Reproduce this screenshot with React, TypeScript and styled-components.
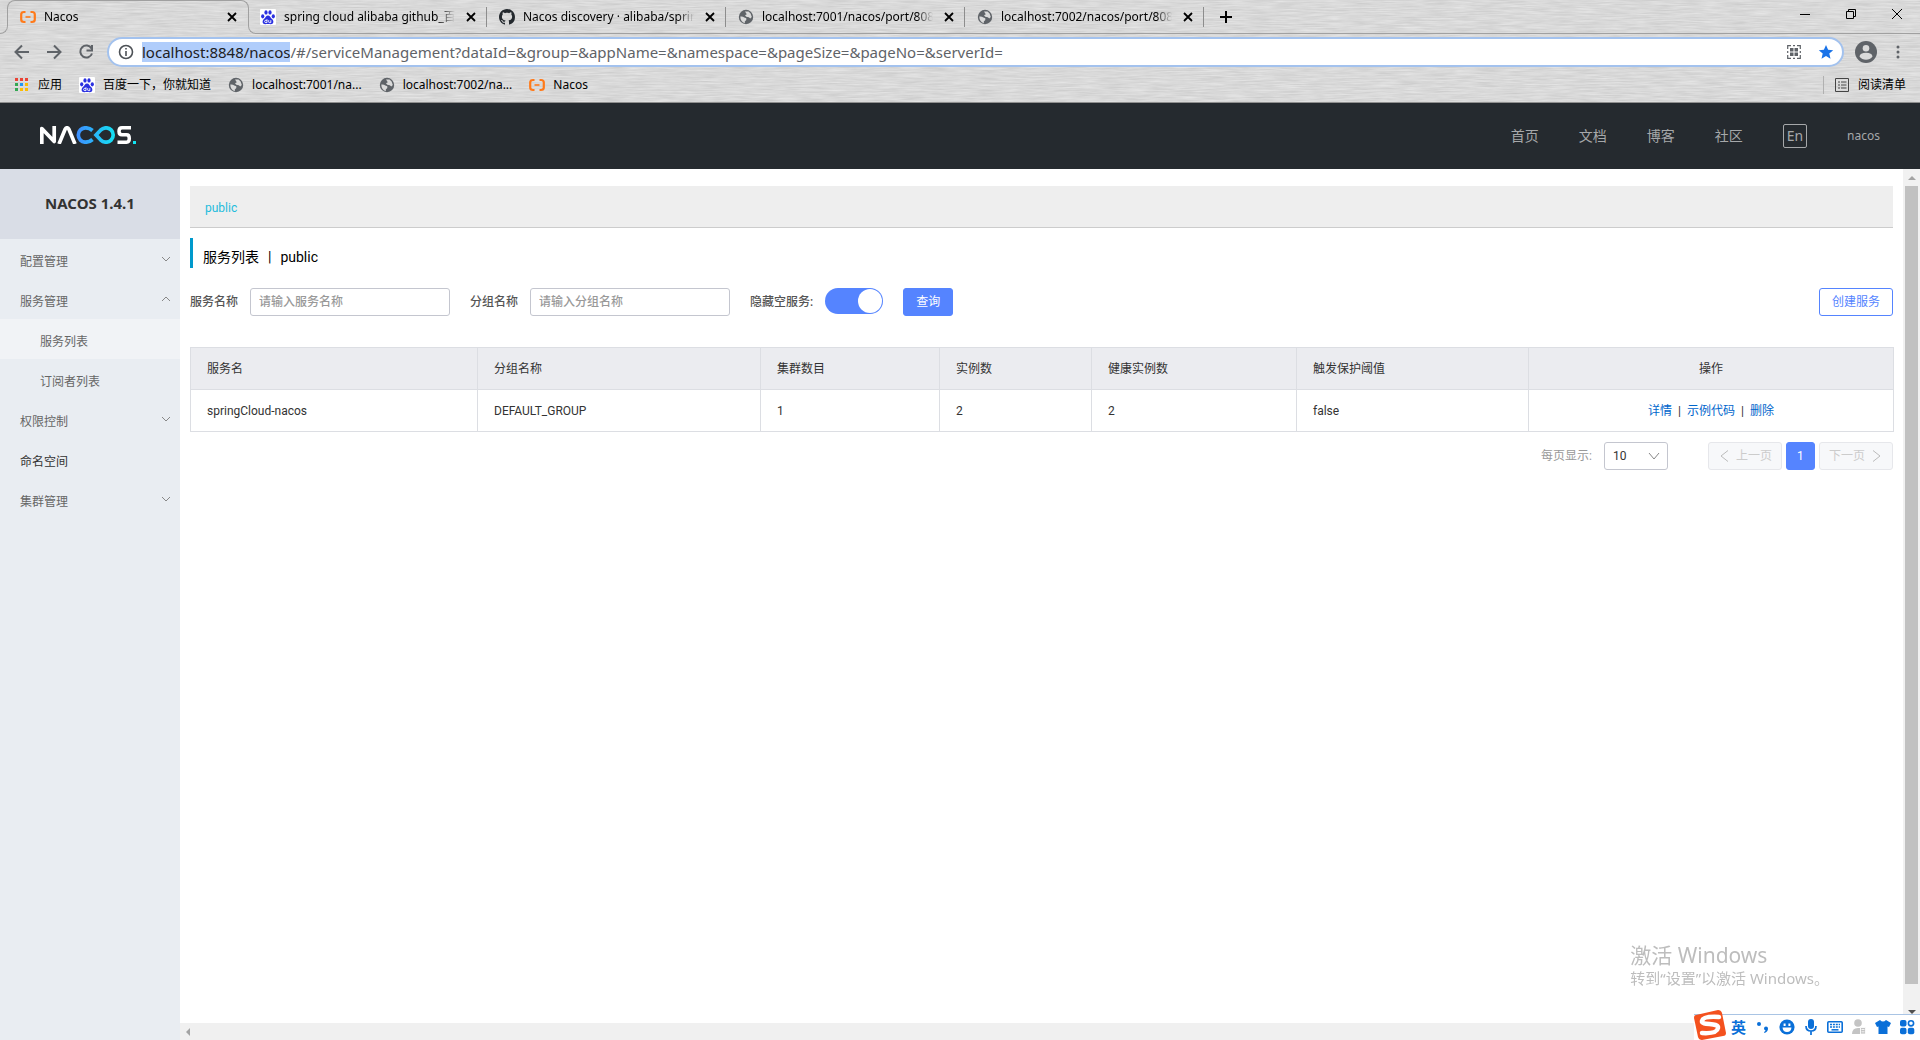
import React from "react";
import styled, { createGlobalStyle } from "styled-components";

const chromeFont = `"Noto Sans", "Noto Sans CJK SC", sans-serif`;
const pageFont = `Roboto, "Noto Sans CJK SC", sans-serif`;

const GlobalStyle = createGlobalStyle`
  * { box-sizing: border-box; }
  html, body { margin: 0; padding: 0; }
  body { font-family: ${chromeFont}; font-size: 12px; line-height: 18px; color: #333; background: #fff; }
  button, input, select { font: inherit; margin: 0; }
  button { cursor: pointer; padding: 0; border: 0; background: none; color: inherit; }
  a { color: inherit; text-decoration: none; }
  svg { display: block; flex: none; }
  ul { list-style: none; margin: 0; padding: 0; }
`;

const Screen = styled.div`
  display: flex;
  flex-direction: column;
  height: 100vh;
  overflow: hidden;
`;

/* ---------- browser chrome ---------- */

const Chrome = styled.div`
  position: relative;
  isolation: isolate;
  background: #d9d9d9;
  border-bottom: 1px solid #8f8f8f;
  color: #000;
`;

const Metal = styled.svg`
  position: absolute;
  inset: 0;
  width: 100%;
  height: 100%;
  z-index: -1;
`;

const TabStrip = styled.div`
  display: flex;
  height: 34px;
`;

const Curve = styled.div<{ $side: "left" | "right" }>`
  align-self: flex-end;
  width: 8px;
  height: 8px;
  border: 0 solid #a0a0a0;
  border-bottom-width: 1px;
  ${(p) =>
    p.$side === "left"
      ? `border-right-width: 1px; border-bottom-right-radius: 8px;`
      : `border-left-width: 1px; border-bottom-left-radius: 8px;`}
`;

const RestOfStrip = styled.div`
  display: flex;
  flex: 1;
  border-bottom: 1px solid #a0a0a0;
  & > :first-child { margin-left: -8px; }
`;

const Tab = styled.div<{ $active?: boolean }>`
  display: flex;
  align-items: center;
  gap: 8px;
  width: ${(p) => (p.$active ? 240 : 239)}px;
  height: 34px;
  padding: 0 8px 0 12px;
  position: relative;
  &::after {
    content: "";
    position: absolute;
    ${(p) =>
      p.$active
        ? `inset: 0 -1px 8px -1px; border: 1px solid #a0a0a0; border-bottom: 0; border-radius: 8px 8px 0 0; pointer-events: none;`
        : `right: 0; top: 7px; width: 1px; height: 20px; background: #8d8d8d;`}
  }
`;

const TabTitle = styled.span`
  flex: 1;
  min-width: 0;
  overflow: hidden;
  white-space: nowrap;
  mask-image: linear-gradient(to right, #000 calc(100% - 16px), transparent);
`;

const IconButton = styled.button<{ $size?: number }>`
  display: flex;
  align-items: center;
  justify-content: center;
  flex: none;
  width: ${(p) => p.$size ?? 16}px;
  height: ${(p) => p.$size ?? 16}px;
`;

const NewTab = styled(IconButton)`
  margin: 9px 0 0 14px;
`;

const WindowButtons = styled.div`
  display: flex;
  gap: 30px;
  margin: 6px 15px 0 auto;
`;

const Toolbar = styled.div`
  display: flex;
  align-items: center;
  height: 36px;
  padding: 0 12px 0 14px;
`;

const NavButtons = styled.div`
  display: flex;
  gap: 16px;
  width: 93px;
`;

const Omnibox = styled.div`
  display: flex;
  align-items: center;
  gap: 16px;
  flex: 1;
  height: 30px;
  padding: 0 8px 0 9px;
  border: 2px solid #a3c2ee;
  border-radius: 15px;
  background: #fff;
  font-size: 15px;
  line-height: 20px;
`;

const Address = styled.div`
  display: flex;
  align-items: center;
  flex: 1;
  gap: 8px;
`;

const Url = styled.div`
  color: #5f6368;
  white-space: nowrap;
`;

const Selected = styled.span`
  display: inline-block;
  line-height: 20px;
  background: #b0cdfb;
  color: #202124;
`;

const Bookmarks = styled.div`
  display: flex;
  align-items: center;
  height: 32px;
  padding: 0 14px 2px;
  gap: 17px;
`;

const Bookmark = styled.a<{ $end?: boolean }>`
  display: flex;
  align-items: center;
  gap: 8px;
  white-space: nowrap;
  ${(p) => p.$end && `margin-left: auto; border-left: 1px solid #b0b0b0; padding-left: 10px;`}
`;

/* ---------- nacos header ---------- */

const Header = styled.header`
  display: flex;
  align-items: center;
  justify-content: space-between;
  height: 66px;
  flex: none;
  padding: 0 40px 2px;
  background: #252a2f;
`;

const HeaderNav = styled.nav`
  display: flex;
  align-items: center;
  gap: 40px;
  padding-top: 2px;
  color: #a6a8aa;
  font-size: 14px;
`;

const LangButton = styled.button`
  height: 24px;
  padding: 0 3px;
  border: 1px solid #a6a8aa;
  border-radius: 2px;
  line-height: 20px;
`;

const User = styled.a`
  font-size: 12px;
`;

/* ---------- body ---------- */

const Body = styled.div`
  display: flex;
  flex: 1;
  min-height: 0;
`;

const Side = styled.aside`
  width: 180px;
  flex: none;
  background: #e9edf2;
`;

const SideTitle = styled.h1`
  margin: 0;
  height: 70px;
  line-height: 68px;
  text-align: center;
  font-size: 15px;
  font-weight: 700;
  background: #d9dde6;
`;

const SideItem = styled.a<{ $sub?: boolean; $active?: boolean; $dark?: boolean }>`
  display: flex;
  align-items: center;
  justify-content: space-between;
  height: 40px;
  padding: 6px 8px 0 ${(p) => (p.$sub ? 40 : 20)}px;
  color: ${(p) => (p.$dark ? "#333" : "#666")};
  background: ${(p) => (p.$active ? "#f1f3f6" : "transparent")};
`;

const SideArrow = styled.span`
  margin-bottom: 6px;
`;

const Main = styled.main`
  display: flex;
  flex-direction: column;
  flex: 1;
  min-width: 0;
  font-family: ${pageFont};
`;

const MainRow = styled.div`
  display: flex;
  flex: 1;
  min-height: 0;
`;

const Content = styled.div`
  flex: 1;
  min-width: 0;
  padding: 17px 10px 0;
`;

const VTrack = styled.div`
  display: flex;
  flex-direction: column;
  align-items: center;
  justify-content: space-between;
  width: 17px;
  padding: 6px 0 8px;
  background: #f1f1f1;
`;

const VThumb = styled.div`
  flex: 1;
  width: 13px;
  margin: 6px 0 26px;
  background: #c1c1c1;
`;

const HTrack = styled.div`
  display: flex;
  align-items: center;
  height: 17px;
  padding-left: 6px;
  background: #f0f0f0;
`;

const Namespaces = styled.div`
  height: 42px;
  padding: 0 15px;
  border-bottom: 1px solid #ccc;
  background: #eee;
  line-height: 45px;
  color: #1fbcdc;
`;

const PageTitle = styled.h2`
  height: 30px;
  margin: 10px 0 20px;
  padding: 4px 0 0 10px;
  border-left: 3px solid #09c;
  font-size: 14px;
  font-weight: 400;
  line-height: 30px;
  color: #000;
`;

const TitleBar = styled.span`
  margin: 0 9px;
`;

const Filters = styled.form`
  display: flex;
  align-items: center;
  gap: 20px;
  margin-bottom: 31px;
`;

const Field = styled.label`
  display: flex;
  align-items: center;
  gap: 12px;
  font-weight: 500;
  color: #555;
`;

const TextInput = styled.input`
  width: 200px;
  height: 28px;
  padding: 0 8px;
  border: 1px solid #c4c6cf;
  border-radius: 3px;
  background: #fff;
  &::placeholder { color: #999; opacity: 1; }
`;

const Switch = styled.input`
  appearance: none;
  display: flex;
  justify-content: flex-end;
  width: 58px;
  height: 26px;
  margin: 0 0 2px;
  padding: 1px;
  border-radius: 13px;
  background: #5584ff;
  &::before {
    content: "";
    width: 24px;
    height: 24px;
    border-radius: 12px;
    background: #fff;
  }
`;

const Button = styled.button<{ $kind: "primary" | "outline" }>`
  height: 28px;
  padding: 0 12px;
  border: 1px solid #5584ff;
  border-radius: 3px;
  background: ${(p) => (p.$kind === "primary" ? "#5584ff" : "#fff")};
  color: ${(p) => (p.$kind === "primary" ? "#fff" : "#5584ff")};
`;

const CreateButton = styled(Button)`
  margin-left: auto;
`;

const Table = styled.table`
  width: 100%;
  table-layout: fixed;
  border-collapse: collapse;
  text-align: left;
`;

const Col = styled.col<{ $w: number }>`
  width: ${(p) => p.$w}px;
`;

const cell = `
  height: 42px;
  padding: 0 16px;
  border: 1px solid #dcdee3;
  font-weight: 400;
`;

const Th = styled.th<{ $center?: boolean }>`
  ${cell}
  background: #ebecf0;
  text-align: ${(p) => (p.$center ? "center" : "left")};
`;

const Td = styled.td<{ $center?: boolean }>`
  ${cell}
  text-align: ${(p) => (p.$center ? "center" : "left")};
`;

const Action = styled.a`
  color: #06c;
`;

const Bar = styled.span`
  margin: 0 6px;
`;

const Pager = styled.div`
  display: flex;
  align-items: center;
  justify-content: flex-end;
  gap: 4px;
  margin-top: 10px;
`;

const SizeField = styled.label`
  display: flex;
  align-items: center;
  gap: 12px;
  margin-right: 36px;
  color: #999;
`;

const SelectBox = styled.span`
  display: grid;
  align-items: center;
  & > * { grid-area: 1 / 1; }
  & > svg { justify-self: end; margin-right: 8px; pointer-events: none; }
`;

const Select = styled.select`
  appearance: none;
  width: 64px;
  height: 28px;
  padding: 0 8px;
  border: 1px solid #c4c6cf;
  border-radius: 3px;
  background: #fff;
  color: #333;
`;

const PageButton = styled.button<{ $current?: boolean }>`
  display: flex;
  align-items: center;
  justify-content: center;
  gap: 6px;
  height: 28px;
  min-width: 29px;
  padding: 0 ${(p) => (p.$current ? 8 : 9)}px;
  border: 1px solid ${(p) => (p.$current ? "#5584ff" : "#e6e7eb")};
  border-radius: 3px;
  background: ${(p) => (p.$current ? "#5584ff" : "#f7f8fa")};
  color: ${(p) => (p.$current ? "#fff" : "#ccc")};
`;

/* ---------- desktop overlays ---------- */

const Watermark = styled.div`
  position: fixed;
  right: 91px;
  bottom: 51px;
  color: #bdbdbd;
  font-size: 15px;
  line-height: 22px;
`;

const WatermarkTitle = styled.div`
  font-size: 21px;
  line-height: 24px;
`;

const Ime = styled.div`
  position: fixed;
  right: 0;
  bottom: 0;
  display: flex;
  align-items: center;
  gap: 8px;
  height: 26px;
  padding: 0 5px 2px 37px;
  border-top: 1px solid #a9c4e4;
  background: #fff;
  color: #0a6fd8;
`;

const ImeLogo = styled.svg`
  position: absolute;
  left: 0;
  bottom: 0;
`;

const ImeMode = styled.span`
  width: 16px;
  font-size: 15px;
  font-weight: 700;
  line-height: 16px;
`;

/* ---------- icons ---------- */

const NacosIcon = () => (
  <svg width="16" height="16" viewBox="0 0 16 16" fill="none" stroke="#ff7a1a" strokeWidth="2.200">
    <path d="M5.500 3H4Q1.200 3 1.200 5.500V10.500Q1.200 13 4 13H5.500M10.500 3H12Q14.800 3 14.800 5.500V10.500Q14.800 13 12 13H10.500" />
    <path d="M5.500 8H10.500" strokeWidth="1.600" />
  </svg>
);

const BaiduIcon = () => (
  <svg width="16" height="16" viewBox="0 0 16 16">
    <rect width="16" height="16" rx="1" fill="#fff" />
    <g fill="#2a30e0">
      <ellipse cx="2.700" cy="7.300" rx="1.600" ry="2.100" />
      <ellipse cx="6" cy="3.400" rx="1.600" ry="2.200" />
      <ellipse cx="10" cy="3.400" rx="1.600" ry="2.200" />
      <ellipse cx="13.300" cy="7.300" rx="1.600" ry="2.100" />
      <path d="M8 6.500C10 6.500 10.500 8.700 12 10C14.500 12.300 13.300 15.300 10.800 15.200C9 15 7 15 5.200 15.200C2.700 15.300 1.500 12.300 4 10C5.500 8.700 6 6.500 8 6.500Z" />
    </g>
    <path d="M7 10.300V13.600H5.800A1.100 1.100 0 0 1 5.800 11.300H7M8.700 11.200V12.900Q8.700 13.600 9.400 13.600H10.800V11.200" fill="none" stroke="#fff" strokeWidth=".9" />
  </svg>
);

const GithubIcon = () => (
  <svg width="16" height="16" viewBox="0 0 16 16" fill="#24292e">
    <path d="M8 0C3.580 0 0 3.580 0 8c0 3.540 2.290 6.530 5.470 7.590.4.070.55-.17.55-.38 0-.19-.01-.82-.01-1.490-2.010.37-2.530-.49-2.690-.94-.09-.23-.48-.94-.82-1.130-.28-.15-.68-.52-.01-.53.63-.01 1.080.58 1.230.82.72 1.210 1.870.87 2.330.66.07-.52.28-.87.51-1.070-1.780-.2-3.640-.89-3.640-3.950 0-.87.31-1.590.82-2.150-.08-.2-.36-1.020.08-2.120 0 0 .67-.21 2.200.82.64-.18 1.320-.27 2-.27s1.360.09 2 .27c1.530-1.040 2.200-.82 2.200-.82.44 1.100.16 1.920.08 2.120.51.56.82 1.270.82 2.150 0 3.070-1.870 3.750-3.650 3.950.29.25.54.73.54 1.480 0 1.070-.01 1.930-.01 2.200 0 .21.15.46.55.38A8.010 8.010 0 0 0 16 8c0-4.420-3.580-8-8-8Z" />
  </svg>
);

const GlobeIcon = () => (
  <svg width="16" height="16" viewBox="0 0 16 16">
    <circle cx="8" cy="8" r="7.200" fill="#5f6368" />
    <path d="M2.300 7.500Q5 7.200 6.300 8.600L8.300 9.300V11L6.800 12.500V14.200Q2.300 12.800 2.300 7.500ZM7 2.600H10.500L12.600 4.500 13.800 8 12.300 9.600 10.800 8.300 8.300 7.800 7 6.300 8.800 5.300Z" fill="#dadada" />
  </svg>
);

const CloseIcon = () => (
  <svg width="10" height="10" viewBox="0 0 10 10" stroke="#000" strokeWidth="1.800">
    <path d="M1 1L9 9M9 1L1 9" />
  </svg>
);

const AppsIcon = () => (
  <svg width="16" height="16" viewBox="0 0 16 16">
    {["#ea4335", "#ea4335", "#ea4335", "#34a853", "#2196f3", "#fbbc04", "#34a853", "#fbbc04", "#fbbc04"].map((c, i) => (
      <rect key={i} x={1 + (i % 3) * 5} y={1 + Math.floor(i / 3) * 5} width="3" height="3" fill={c} />
    ))}
  </svg>
);

const Stroke = ({ d, size = 20, color = "#5f6368", w = 2 }: { d: string; size?: number; color?: string; w?: number }) => (
  <svg width={size} height={size} viewBox={`0 0 ${size} ${size}`} fill="none" stroke={color} strokeWidth={w}>
    <path d={d} />
  </svg>
);

const Chevron = ({ up }: { up?: boolean }) => (
  <Stroke size={12} w={1} color="#888" d={up ? "M2 8L6 4L10 8" : "M2 4L6 8L10 4"} />
);

const NacosLogo = () => (
  <svg width="98" height="18" viewBox="0 1 98 18" fill="none" strokeWidth="3.700" role="img" aria-label="NACOS.">
    <defs>
      <linearGradient id="wave" gradientUnits="userSpaceOnUse" x1="36" y1="0" x2="76" y2="0">
        <stop offset="0" stopColor="#3f8cff" />
        <stop offset="1" stopColor="#12e3f2" />
      </linearGradient>
    </defs>
    <path d="M1.800 19V3.500L14.200 16.500V1" stroke="#fff" strokeLinejoin="round" />
    <path d="M19 19L25 4.500Q27 1 29 4.500L35 19" stroke="#fff" />
    <path d="M52.500 14.500Q49.500 17.200 45.500 17.200A7.200 7.200 0 0 1 45.500 2.800Q49.500 2.800 52.500 5.500" stroke="url(#wave)" />
    <path d="M56 10L60.500 5.200Q63 2.800 66 2.800A7.200 7.200 0 0 1 66 17.200Q63 17.200 60.500 14.800Z" stroke="url(#wave)" />
    <path d="M91 2.800H82Q79 2.800 79 6.300Q79 9.800 82 9.800H86.500Q89.300 9.800 89.300 13.500Q89.300 17.200 86.500 17.200H77.500" stroke="#fff" strokeWidth="3.500" />
    <rect x="93" y="16" width="3" height="3" fill="#12e3f2" />
  </svg>
);

/* ---------- data ---------- */

const tabs = [
  { icon: <BaiduIcon />, title: "spring cloud alibaba github_百度搜索" },
  { icon: <GithubIcon />, title: "Nacos discovery · alibaba/spring-cloud" },
  { icon: <GlobeIcon />, title: "localhost:7001/nacos/port/8081" },
  { icon: <GlobeIcon />, title: "localhost:7002/nacos/port/8081" },
];

const bookmarks = [
  { icon: <AppsIcon />, title: "应用" },
  { icon: <BaiduIcon />, title: "百度一下，你就知道" },
  { icon: <GlobeIcon />, title: "localhost:7001/na..." },
  { icon: <GlobeIcon />, title: "localhost:7002/na..." },
  { icon: <NacosIcon />, title: "Nacos" },
];

const menu: { text: string; sub?: boolean; active?: boolean; dark?: boolean; arrow?: "up" | "down" }[] = [
  { text: "配置管理", arrow: "down" },
  { text: "服务管理", arrow: "up" },
  { text: "服务列表", sub: true, active: true },
  { text: "订阅者列表", sub: true },
  { text: "权限控制", arrow: "down" },
  { text: "命名空间", dark: true },
  { text: "集群管理", arrow: "down" },
];

const columns = [
  { title: "服务名", w: 287 },
  { title: "分组名称", w: 283 },
  { title: "集群数目", w: 179 },
  { title: "实例数", w: 152 },
  { title: "健康实例数", w: 205 },
  { title: "触发保护阈值", w: 232 },
  { title: "操作", w: 365 },
];

const rows = [["springCloud-nacos", "DEFAULT_GROUP", "1", "2", "2", "false"]];

const BrowserTab = ({ icon, title, active }: { icon: React.ReactNode; title: string; active?: boolean }) => (
  <Tab $active={active}>
    {icon}
    <TabTitle>{title}</TabTitle>
    <IconButton aria-label="关闭标签页"><CloseIcon /></IconButton>
  </Tab>
);

export default function App() {
  return (
    <Screen>
      <GlobalStyle />
      <Chrome>
        <Metal aria-hidden="true">
          <filter id="brushed" x="0" y="0" width="100%" height="100%" colorInterpolationFilters="sRGB">
            <feTurbulence type="fractalNoise" baseFrequency="0.04 0.7" numOctaves="3" seed="4" />
            <feColorMatrix values="0.13 0 0 0 0.785  0.13 0 0 0 0.785  0.13 0 0 0 0.785  0 0 0 0 1" />
          </filter>
          <rect width="100%" height="100%" filter="url(#brushed)" />
        </Metal>
        <TabStrip>
          <Curve $side="left" />
          <BrowserTab icon={<NacosIcon />} title="Nacos" active />
          <Curve $side="right" />
          <RestOfStrip>
            {tabs.map((t) => <BrowserTab key={t.title} {...t} />)}
            <NewTab aria-label="新标签页"><Stroke size={14} color="#000" d="M7 1V13M1 7H13" /></NewTab>
            <WindowButtons>
              <IconButton aria-label="最小化"><Stroke size={12} w={1} color="#000" d="M1 6.500H11" /></IconButton>
              <IconButton aria-label="还原"><Stroke size={12} w={1} color="#000" d="M1.500 3.500H8.500V10.500H1.500ZM3.500 3.500V1.500H10.500V8.500H8.500" /></IconButton>
              <IconButton aria-label="关闭"><Stroke size={12} w={1} color="#000" d="M1 1L11 11M11 1L1 11" /></IconButton>
            </WindowButtons>
          </RestOfStrip>
        </TabStrip>
        <Toolbar>
          <NavButtons>
            <IconButton aria-label="后退"><Stroke size={16} d="M15 8H2M8 1.500L1.500 8L8 14.500" /></IconButton>
            <IconButton aria-label="前进"><Stroke size={16} d="M1 8H14M8 1.500L14.500 8L8 14.500" /></IconButton>
            <IconButton aria-label="重新加载"><Stroke size={16} d="M13.500 4.500A6 6 0 1 0 14 9.500M14 1V6.500H8.500" /></IconButton>
          </NavButtons>
          <Omnibox>
            <Address>
              <svg width="16" height="16" viewBox="0 0 16 16" fill="none" stroke="#4d5156" strokeWidth="1.600">
                <circle cx="8" cy="8" r="6.500" />
                <path d="M8 7V12M8 4V5.600" />
              </svg>
              <Url>
                <Selected>localhost:8848/nacos</Selected>
                /#/serviceManagement?dataId=&amp;group=&amp;appName=&amp;namespace=&amp;pageSize=&amp;pageNo=&amp;serverId=
              </Url>
            </Address>
            <IconButton aria-label="二维码">
              <svg width="14" height="14" viewBox="0 0 14 14" fill="#5f6368">
                <path d="M3 3H6.500V6.500H3ZM7.500 3H11V6.500H7.500ZM3 7.500H6.500V11H3ZM7.500 7.500H11V11H7.500Z" />
                <path d="M.7 4V.7H4M6 .7H8M10 .7H13.300V4M13.300 6V8M13.300 10V13.300H10M8 13.300H6M4 13.300H.7V10M.7 8V6" fill="none" stroke="#5f6368" strokeWidth="1.200" />
              </svg>
            </IconButton>
            <IconButton aria-label="收藏">
              <svg width="16" height="16" viewBox="0 0 16 16" fill="#1a73e8">
                <path d="M8 1L10.100 5.800 15.200 6.200 11.300 9.600 12.500 14.700 8 12 3.500 14.700 4.700 9.600 .8 6.200 5.900 5.800Z" />
              </svg>
            </IconButton>
          </Omnibox>
          <IconButton aria-label="用户" $size={44}>
            <svg width="22" height="22" viewBox="0 0 22 22">
              <circle cx="11" cy="11" r="11" fill="#5f6368" />
              <circle cx="11" cy="7.300" r="3.300" fill="#dadada" />
              <path d="M4.500 15.500Q5 11.800 11 11.800T17.500 15.500Q15 18.800 11 18.800T4.500 15.500Z" fill="#dadada" />
            </svg>
          </IconButton>
          <IconButton aria-label="菜单" $size={20}>
            <svg width="16" height="16" viewBox="0 0 16 16" fill="#5f6368">
              <circle cx="8" cy="3" r="1.500" />
              <circle cx="8" cy="8" r="1.500" />
              <circle cx="8" cy="13" r="1.500" />
            </svg>
          </IconButton>
        </Toolbar>
        <Bookmarks>
          {bookmarks.map((b) => (
            <Bookmark key={b.title} href="#">{b.icon}{b.title}</Bookmark>
          ))}
          <Bookmark href="#" $end>
            <Stroke size={16} w={1} color="#444" d="M1.500 1.500H14.500V14.500H1.500ZM4 5H6M7 5H12.500M4 8H6M7 8H12.500M4 11H6M7 11H12.500" />
            阅读清单
          </Bookmark>
        </Bookmarks>
      </Chrome>

      <Header>
        <NacosLogo />
        <HeaderNav>
          <a href="#">首页</a>
          <a href="#">文档</a>
          <a href="#">博客</a>
          <a href="#">社区</a>
          <LangButton>En</LangButton>
          <User href="#">nacos</User>
        </HeaderNav>
      </Header>

      <Body>
        <Side>
          <SideTitle>NACOS 1.4.1</SideTitle>
          <ul>
            {menu.map((m) => (
              <li key={m.text}>
                <SideItem href="#" $sub={m.sub} $active={m.active} $dark={m.dark}>
                  {m.text}
                  {m.arrow && <SideArrow><Chevron up={m.arrow === "up"} /></SideArrow>}
                </SideItem>
              </li>
            ))}
          </ul>
        </Side>
        <Main>
          <MainRow>
            <Content>
              <Namespaces><a href="#">public</a></Namespaces>
              <PageTitle>服务列表<TitleBar>|</TitleBar>public</PageTitle>
              <Filters onSubmit={(e) => e.preventDefault()}>
                <Field>服务名称<TextInput placeholder="请输入服务名称" /></Field>
                <Field>分组名称<TextInput placeholder="请输入分组名称" /></Field>
                <Field>隐藏空服务:<Switch type="checkbox" role="switch" defaultChecked /></Field>
                <Button type="submit" $kind="primary">查询</Button>
                <CreateButton type="button" $kind="outline">创建服务</CreateButton>
              </Filters>
              <Table>
                <colgroup>{columns.map((c) => <Col key={c.title} $w={c.w} />)}</colgroup>
                <thead>
                  <tr>{columns.map((c) => <Th key={c.title} $center={c.title === "操作"}>{c.title}</Th>)}</tr>
                </thead>
                <tbody>
                  {rows.map((r) => (
                    <tr key={r[0]}>
                      {r.map((v, i) => <Td key={i}>{v}</Td>)}
                      <Td $center>
                        <Action href="#">详情</Action><Bar>|</Bar>
                        <Action href="#">示例代码</Action><Bar>|</Bar>
                        <Action href="#">删除</Action>
                      </Td>
                    </tr>
                  ))}
                </tbody>
              </Table>
              <Pager>
                <SizeField>
                  每页显示:
                  <SelectBox>
                    <Select defaultValue="10"><option>10</option><option>20</option></Select>
                    <Stroke size={12} w={1} color="#888" d="M1 3L6 9L11 3" />
                  </SelectBox>
                </SizeField>
                <PageButton disabled><Stroke size={12} w={1} color="#bbb" d="M10 0.500L3 6L10 11.500" />上一页</PageButton>
                <PageButton $current>1</PageButton>
                <PageButton disabled>下一页<Stroke size={12} w={1} color="#bbb" d="M2 0.500L9 6L2 11.500" /></PageButton>
              </Pager>
            </Content>
            <VTrack>
              <svg width="8" height="5" viewBox="0 0 8 5" fill="#a3a3a3"><path d="M0 5L4 1L8 5Z" /></svg>
              <VThumb />
              <svg width="8" height="5" viewBox="0 0 8 5" fill="#505050"><path d="M0 0L4 4L8 0Z" /></svg>
            </VTrack>
          </MainRow>
          <HTrack>
            <svg width="5" height="8" viewBox="0 0 5 8" fill="#a3a3a3"><path d="M4 0L0 4L4 8Z" /></svg>
          </HTrack>
        </Main>
      </Body>

      <Watermark>
        <WatermarkTitle>激活 Windows</WatermarkTitle>
        转到“设置”以激活 Windows。
      </Watermark>

      <Ime>
        <ImeLogo width="32" height="30" viewBox="0 0 32 30">
          <path d="M2 5L24 0Q27 0 28 3L32 23Q32 26 29 26L8 30Q5 30 4 27L0 8Q0 5 2 5Z" fill="#f4511e" />
          <path d="M25 7Q9 6 8 11C7 16 25 12 24 18Q23 24 8 23" fill="none" stroke="#fff" strokeWidth="4.500" strokeLinecap="round" />
        </ImeLogo>
        <ImeMode>英</ImeMode>
        <svg width="16" height="16" viewBox="0 0 16 16" fill="#0a6fd8">
          <circle cx="4" cy="5" r="2" />
          <path d="M9 9.500A2 2 0 1 1 13 9.500Q13 12.500 9.500 14L9 13Q10.500 12.300 10.500 11.300Q9 11 9 9.500Z" />
        </svg>
        <svg width="16" height="16" viewBox="0 0 16 16">
          <circle cx="8" cy="8" r="7.600" fill="#0a6fd8" />
          <path d="M4.600 4.500H6.600V7H4.600ZM9.400 4.500H11.400V7H9.400ZM3.500 8.500H12.500Q12 13 8 13T3.500 8.500Z" fill="#fff" />
        </svg>
        <svg width="16" height="16" viewBox="0 0 16 16" fill="#0a6fd8">
          <rect x="5" y="0" width="6" height="10" rx="3" />
          <path d="M3 7Q3 12 8 12T13 7M8 12V16" fill="none" stroke="#0a6fd8" strokeWidth="1.700" />
        </svg>
        <svg width="16" height="16" viewBox="0 0 16 16">
          <rect x=".8" y="2.800" width="14.400" height="10.500" rx="1" fill="none" stroke="#0a6fd8" strokeWidth="1.600" />
          <path d="M3 5.500H13M3 8H13" stroke="#0a6fd8" strokeWidth="1.500" strokeDasharray="2 .9" />
          <path d="M4.500 10.800H11.500" stroke="#0a6fd8" strokeWidth="1.500" />
        </svg>
        <svg width="16" height="16" viewBox="0 0 16 16" fill="#c4c4c4">
          <circle cx="7" cy="4" r="3.800" />
          <path d="M1 15Q1 9 7 9H9V15Z" />
          <path d="M9.500 8.500H14.500V15H9.500ZM10.500 10.500H13.500M10.500 12.800H13.500" stroke="#fff" strokeWidth=".8" />
        </svg>
        <svg width="16" height="16" viewBox="0 0 16 16" fill="#0a6fd8">
          <path d="M5 1Q8 4 11 1L16 4L14 8L12.500 7.500V15H3.500V7.500L2 8L0 4Z" />
        </svg>
        <svg width="16" height="16" viewBox="0 0 16 16" fill="#0a6fd8">
          <rect x="1" y="1" width="6.500" height="6.500" rx="2" />
          <circle cx="12" cy="4.300" r="2.600" fill="none" stroke="#0a6fd8" strokeWidth="1.600" />
          <rect x="1" y="8.800" width="6.500" height="6.500" rx="2" />
          <rect x="8.800" y="8.800" width="6.500" height="6.500" rx="2" />
        </svg>
      </Ime>
    </Screen>
  );
}
